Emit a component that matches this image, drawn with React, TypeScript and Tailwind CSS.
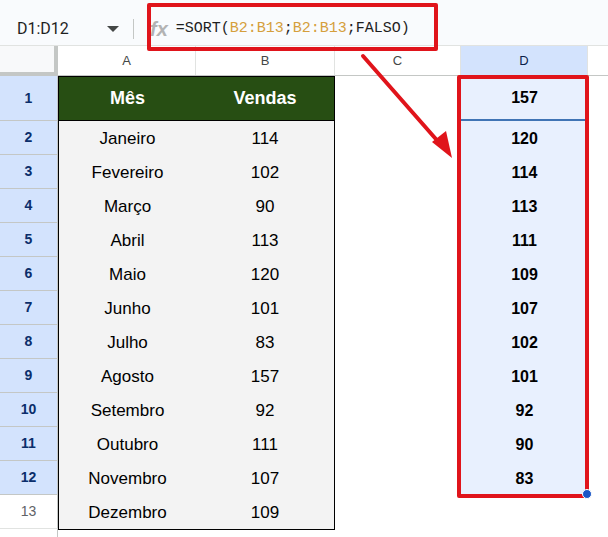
import React from "react";

const months = [
  ["Janeiro", "114"],
  ["Fevereiro", "102"],
  ["Março", "90"],
  ["Abril", "113"],
  ["Maio", "120"],
  ["Junho", "101"],
  ["Julho", "83"],
  ["Agosto", "157"],
  ["Setembro", "92"],
  ["Outubro", "111"],
  ["Novembro", "107"],
  ["Dezembro", "109"],
];
const sorted = ["120", "114", "113", "111", "109", "107", "102", "101", "92", "90", "83"];

const font = { fontFamily: '"Liberation Sans", Arial, sans-serif' };

export default function App() {
  return (
    <div className="relative w-[608px] h-[537px] overflow-hidden bg-white" style={font}>
      {/* Formula bar */}
      <div className="flex items-center h-[46px] pt-[12px] bg-[#f9fbfd] border-b border-[#e1e3e1]">
        <div className="w-[133px] h-full flex items-center pl-[17px] pr-[14px]">
          <span className="text-[16px] text-[#1f1f1f] flex-1" style={{ fontFamily: 'Roboto, "Liberation Sans", sans-serif' }}>D1:D12</span>
          <svg width="12" height="6" viewBox="0 0 12 6"><path d="M0 0 L12 0 L6 6 Z" fill="#444746" /></svg>
        </div>
        <div className="w-px h-[20px] bg-[#c4c7c5]" />
        <div className="w-[16px]" />
        <span className="text-[20px] font-bold italic text-[#b3b3b3] leading-none">fx</span>
        <span className="ml-[8px] text-[15px] text-[#1f1f1f] leading-none" style={{ fontFamily: '"Liberation Mono", monospace' }}>
          =SORT(<span className="text-[#d59f3c]">B2:B13</span>;<span className="text-[#d59f3c]">B2:B13</span>;FALSO)
        </span>
      </div>

      {/* Column headers */}
      <div className="flex h-[30px] border-b border-[#c4c7c5] text-[13px] text-[#444746]">
        <div className="w-[58px] h-full bg-[#f8f9fa] border-r-[4px] border-b-[3px] border-[#c4c7c5] box-border" />
        <div className="w-[138px] flex items-center justify-center border-r border-[#e1e3e1]">A</div>
        <div className="w-[139px] flex items-center justify-center border-r border-[#e1e3e1]">B</div>
        <div className="w-[126px] flex items-center justify-center border-r border-[#e1e3e1]">C</div>
        <div className="w-[127px] flex items-center justify-center bg-[#d3e3fd] text-[#0b1f4a] border-r border-[#e1e3e1]">D</div>
        <div className="flex-1" />
      </div>

      {/* Body */}
      <div className="flex">
        {/* Row headers */}
        <div className="w-[58px] flex flex-col text-[14px]">
          <div className="h-[45px] flex items-center justify-center bg-[#d3e3fd] font-bold text-[#0b2e6b] border-b border-[#c4c7c5] border-r border-r-[#c4c7c5]">1</div>
          {Array.from({ length: 11 }, (_, i) => (
            <div key={i} className="h-[34px] flex items-center justify-center bg-[#d3e3fd] font-bold text-[#0b2e6b] border-b border-[#c4c7c5] border-r border-r-[#c4c7c5]">{i + 2}</div>
          ))}
          <div className="h-[34px] flex items-center justify-center text-[#5f6368] border-b border-[#e1e3e1] border-r border-r-[#c4c7c5]">13</div>
          <div className="h-[20px] flex items-start justify-center text-[#5f6368] border-r border-[#c4c7c5] pt-[6px]">14</div>
        </div>

        {/* Table A:B */}
        <div className="flex flex-col">
          <div className="w-[277px] border border-black h-[454px] flex flex-col">
            <div className="h-[44px] flex bg-[#274e13] text-white text-[18px] font-bold border-b border-black">
              <div className="w-[137px] flex items-center justify-center">Mês</div>
              <div className="w-[138px] flex items-center justify-center">Vendas</div>
            </div>
            {months.map(([m, v]) => (
              <div key={m} className="h-[34px] flex bg-[#f3f3f3] text-[17px] text-[#000] pt-[1px]">
                <div className="w-[137px] flex items-center justify-center">{m}</div>
                <div className="w-[138px] flex items-center justify-center">{v}</div>
              </div>
            ))}
          </div>
        </div>

        {/* Column C */}
        <div className="w-[126px]" />

        {/* Column D */}
        <div className="w-[127px] flex flex-col text-[16px] font-bold text-black">
          <div className="h-[45px] flex items-center justify-center bg-[#e8f0fe] border-b-[2px] border-[#3f74b5] box-border">157</div>
          {sorted.map((v) => (
            <div key={v} className="h-[34px] flex items-center justify-center bg-[#e8f0fe] pt-[1px]">{v}</div>
          ))}
        </div>
      </div>

      {/* Red annotation boxes */}
      <div className="absolute left-[147px] top-[3px] w-[291px] h-[48px] border-[4px] border-[#e0141b] rounded-[2px]" />
      <div className="absolute left-[457px] top-[75px] w-[132px] h-[423px] border-[4px] border-[#e0141b] rounded-[2px]" />

      {/* Fill handle */}
      <div className="absolute left-[582px] top-[489px] w-[10px] h-[10px] rounded-full bg-[#1a56c6] border border-white" />

      {/* Arrow */}
      <svg className="absolute left-0 top-0" width="608" height="537" viewBox="0 0 608 537">
        <line x1="363" y1="56" x2="442" y2="146" stroke="#e0141b" strokeWidth="4" strokeLinecap="round" />
        <path d="M452 158 L432 142 L446 131 Z" fill="#e0141b" />
      </svg>
    </div>
  );
}
